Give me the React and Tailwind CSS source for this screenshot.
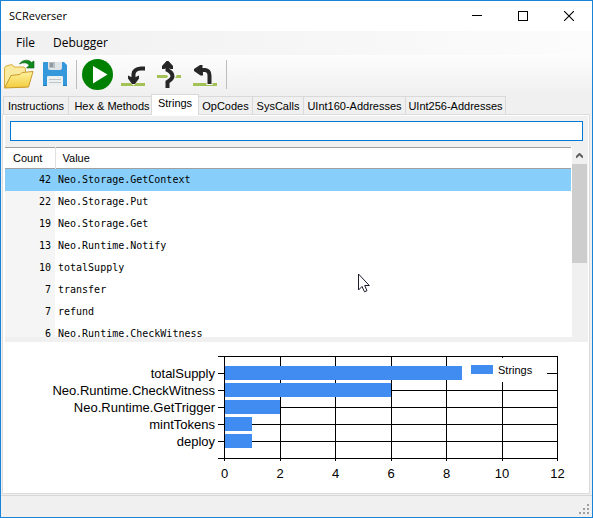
import React from "react";

const tabs = [
  { name: "Instructions", cls: "w-[66px]" },
  { name: "Hex & Methods", cls: "w-[84px] pl-1" },
  { name: "Strings", cls: "w-12" },
  { name: "OpCodes", cls: "w-[55px]" },
  { name: "SysCalls", cls: "w-[52px]" },
  { name: "UInt160-Addresses", cls: "w-[103px]" },
  { name: "UInt256-Addresses", cls: "w-[101px]" },
];

const rows = [
  [42, "Neo.Storage.GetContext"],
  [22, "Neo.Storage.Put"],
  [19, "Neo.Storage.Get"],
  [13, "Neo.Runtime.Notify"],
  [10, "totalSupply"],
  [7, "transfer"],
  [7, "refund"],
  [6, "Neo.Runtime.CheckWitness"],
];

const bars = [
  ["totalSupply", 10],
  ["Neo.Runtime.CheckWitness", 6],
  ["Neo.Runtime.GetTrigger", 2],
  ["mintTokens", 1],
  ["deploy", 1],
];

function TitleBar() {
  const btn = "flex h-full w-[46px] items-center justify-center";
  return (
    <header className="flex h-[30px] items-center bg-white">
      <h1 className="flex-1 pl-2 text-[11px] leading-4 text-black">SCReverser</h1>
      <button aria-label="Minimize" className={btn}>
        <svg width="10" height="10" shapeRendering="crispEdges"><path d="M0 4.500H10" stroke="#000" /></svg>
      </button>
      <button aria-label="Maximize" className={btn}>
        <svg width="10" height="10" shapeRendering="crispEdges"><rect x=".5" y=".5" width="9" height="9" fill="none" stroke="#000" /></svg>
      </button>
      <button aria-label="Close" className={btn}>
        <svg width="10" height="10"><path d="M0 0L10 10M10 0L0 10" stroke="#000" strokeWidth="1.1" /></svg>
      </button>
    </header>
  );
}

function OpenIcon() {
  return (
    <svg width="32" height="31" viewBox="0 0 32 31">
      <defs>
        <linearGradient id="fold" x1="0" y1="0" x2="0" y2="1">
          <stop offset="0" stopColor="#fff3a0" />
          <stop offset="1" stopColor="#f2cc3c" />
        </linearGradient>
      </defs>
      <path d="M1.500 28V9L3 7L9 5.500L11 8L21 8L22.500 10V28Z" fill="#faeaa0" stroke="#d9ae3a" />
      <path d="M1.500 29L8 16.500L17 15.500L19 13.500L30 12.500L25.500 28Z" fill="url(#fold)" stroke="#c9982a" strokeLinejoin="round" />
      <path d="M16.500 5C19 .5 26 0 28.500 3.500L31 2V9H23.500L26 6.500C24.500 3.500 21 3 16.500 5Z" fill="#118a1d" stroke="#0b5f12" strokeWidth=".6" />
    </svg>
  );
}

function SaveIcon() {
  return (
    <svg width="24" height="25" viewBox="0 0 24 25">
      <path d="M1 0H21L24 3V23Q24 24 23 24H1Q0 24 0 23V1Q0 0 1 0Z" fill="#3498db" />
      <path d="M5 0H19V6Q19 8 17 8H7Q5 8 5 6Z" fill="#dfe4e6" />
      <rect x="6" y="0" width="6" height="6" fill="#b8c0c4" />
      <rect x="7" y="1" width="3" height="4" fill="#8d999e" />
      <path d="M4 24V15Q4 14 5 14H19Q20 14 20 15V24Z" fill="#ecf0f1" />
      <path d="M6 17.500H18M6 20.500H18" stroke="#bdc3c7" />
      <path d="M0 23.500H4M20 23.500H24" stroke="#217dbb" />
    </svg>
  );
}

function PlayIcon() {
  return (
    <svg width="31" height="31" viewBox="0 0 31 31">
      <circle cx="15.500" cy="15.500" r="15.500" fill="#008000" />
      <path d="M11 7L25.500 15.500L11 24.500Z" fill="#fff" />
    </svg>
  );
}

function StepInto() {
  return (
    <svg width="24" height="29" viewBox="0 0 24 29">
      <path d="M0 23H24V26H0Z" fill="#a3c255" />
      <path d="M12.500 25.500L9.500 23H15.500Z" fill="#f8f8f8" />
      <path d="M24 8.500H20Q13 9 12.500 14V19" fill="none" stroke="#262626" strokeWidth="4" />
      <path d="M7 15.500L12.500 18L18 15.500V18.500L14 24H11L7 18.500Z" fill="#262626" />
    </svg>
  );
}

function StepOver() {
  return (
    <svg width="24" height="29" viewBox="0 0 24 29">
      <path d="M0 15H24V18H0Z" fill="#a3c255" />
      <path d="M10 11.500L15.500 16L12 20" fill="none" stroke="#f8f8f8" strokeWidth="6" />
      <path d="M10.500 5V10Q15.500 12.500 15.500 16.500Q15 19.500 10.500 22V28" fill="none" stroke="#262626" strokeWidth="4" />
      <path d="M9.500 1H11.500L16 6V9H13.500L10.500 7L7.500 9H5V6Z" fill="#262626" />
    </svg>
  );
}

function StepOut() {
  return (
    <svg width="24" height="29" viewBox="0 0 24 29">
      <path d="M0 23H24V26H0Z" fill="#a3c255" />
      <path d="M13.500 22H19.500V25H13.500Z" fill="#f8f8f8" />
      <path d="M5 10H12Q16.500 10.500 16.500 15.500V24" fill="none" stroke="#262626" strokeWidth="4" />
      <path d="M1 9L7 5H9.500V7.500L8.500 10L10 12.500V15.500H7.500L1 11Z" fill="#262626" />
    </svg>
  );
}

function Separator() {
  return <span className="h-[29px] w-px bg-[#bdbdbd]" />;
}

function Toolbar() {
  return (
    <div className="flex h-[39px] items-center bg-linear-to-b from-[#fdfdfd] to-[#f0f0f0] pl-[2px]">
      <button aria-label="Open"><OpenIcon /></button>
      <button aria-label="Save" className="ml-2 mr-[9px]"><SaveIcon /></button>
      <Separator />
      <button aria-label="Run" className="ml-[5px] mr-2"><PlayIcon /></button>
      <div className="mr-[9px] flex gap-3">
        <button aria-label="Step into"><StepInto /></button>
        <button aria-label="Step over"><StepOver /></button>
        <button aria-label="Step out"><StepOut /></button>
      </div>
      <Separator />
    </div>
  );
}

function TabStrip() {
  return (
    <div role="tablist" className="flex h-5 items-end bg-[#f0f0f0] pl-[2px]">
      {tabs.map((t) => {
        const on = t.name === "Strings";
        return (
          <button
            key={t.name}
            role="tab"
            aria-selected={on}
            className={`${t.cls} -mr-px shrink-0 whitespace-nowrap border border-b-0 border-[#d9d9d9] text-center text-[11px] leading-4 ${
              on ? "relative z-10 -mb-px h-[21px] bg-white pb-1" : "h-[18px] bg-[#f0f0f0]"
            }`}
          >
            {t.name}
          </button>
        );
      })}
    </div>
  );
}

function StringsTable() {
  return (
    <div className="flex h-[190px] overflow-hidden bg-[#f0f0f0]">
      <div className="flex-1 overflow-hidden bg-white pr-px">
        <table className="w-full table-fixed border-collapse">
          <thead>
            <tr className="h-[21px] border-y border-[#a0a0a0] text-[11px] leading-4">
              <th className="w-[50px] border-r border-r-[#e0e0e0] p-0 pl-2 text-left font-normal">Count</th>
              <th className="p-0 pl-[7px] text-left font-normal">Value</th>
            </tr>
          </thead>
          <tbody className="font-['DejaVu_Sans_Mono',monospace] text-[10px] leading-4">
            {rows.map(([n, v], i) => (
              <tr key={v} className={`h-[22px] ${i === 0 ? "bg-[#87cefa]" : ""}`}>
                <td className={`p-0 pr-1 text-right ${i === 0 ? "" : "bg-[#f5f5f5]"}`}>{n}</td>
                <td className="p-0 pl-[3px]">{v}</td>
              </tr>
            ))}
          </tbody>
        </table>
      </div>
      <div className="flex w-4 flex-col pr-px">
        <button aria-label="Scroll up" className="flex h-[17px] items-center justify-center">
          <svg width="7" height="6" viewBox="0 0 7 6"><path d="M0 4.500L3.500 1L7 4.500" fill="none" stroke="#606060" strokeWidth="2" /></svg>
        </button>
        <div className="h-[99px] bg-[#cdcdcd]" />
      </div>
    </div>
  );
}

function Chart() {
  const x0 = 219.5;
  const unit = 55.5 / 2;
  const ticks = [0, 2, 4, 6, 8, 10, 12];
  const lines = [14.5, 31.5, 48.5, 65.5, 82.5, 99.5, 116.5];
  return (
    <svg viewBox="0 0 583 151" className="block w-full" role="img" aria-label="Strings chart">
      <g stroke="#000" shapeRendering="crispEdges">
        {ticks.map((t) => (
          <path key={t} d={`M${Math.floor(x0 + t * unit) + 0.5} 14V119`} />
        ))}
        {lines.map((y) => (
          <path key={y} d={`M213 ${y}H553`} />
        ))}
      </g>
      {bars.map(([name, n], i) => (
        <g key={name}>
          <rect x="220" y={24 + i * 17} width={Math.floor(n * unit)} height="14" fill="#418cf0" shapeRendering="crispEdges" />
          <text x="210" y={36 + i * 17} textAnchor="end" className="text-[13px]">{name}</text>
        </g>
      ))}
      {ticks.map((t) => (
        <text key={t} x={x0 + t * unit} y="136" textAnchor="middle" className="text-[13px]">{t}</text>
      ))}
      <rect x="457" y="16" width="85" height="24" fill="#fff" />
      <rect x="466" y="23" width="22" height="9" fill="#418cf0" />
      <text x="493" y="32" className="text-[11px]">Strings</text>
    </svg>
  );
}

function Pointer() {
  return (
    <svg className="pointer-events-none absolute left-[356px] top-[272px]" width="13" height="20" viewBox="0 0 13 20">
      <path d="M1.500 1V17L5 13.500L7.500 18.800L10 17.700L7.700 12.500H12.300Z" fill="#fff" stroke="#1b1b2b" />
    </svg>
  );
}

export default function App() {
  return (
    <div className="relative flex min-h-screen flex-col border border-[#1883d7] bg-[#f0f0f0] font-['Liberation_Sans',Arial,sans-serif] text-black">
      <div className="font-['Open_Sans','Noto_Sans',sans-serif]">
        <TitleBar />
        <nav className="flex h-6 items-center gap-[18px] bg-linear-to-r from-[#f0f0f0] to-[#fcfcfc] pl-[15px] text-[12px] leading-4">
          <button>File</button>
          <button>Debugger</button>
        </nav>
      </div>
      <Toolbar />
      <TabStrip />
      <main className="ml-px mr-[2px] flex flex-1 flex-col border border-[#dcdcdc] bg-white pl-[2px] pr-px pt-px">
        <div className="bg-[#f0f0f0] px-[5px] pb-[6px] pt-[5px]">
          <input aria-label="Filter strings" className="block h-5 w-full border border-[#0078d7] bg-white px-1 text-[11px] outline-none" />
        </div>
        <StringsTable />
        <div className="h-[5px] bg-[#f0f0f0]" />
        <Chart />
      </main>
      <footer className="mt-px flex h-[22px] items-end justify-end border-t border-[#d7d7d7] pb-[2px] pr-[2px]">
        <svg width="11" height="11" viewBox="0 0 11 11" fill="#a0a0a0" shapeRendering="crispEdges">
          <path d="M8 0h2v2h-2zM4 4h2v2h-2zM8 4h2v2h-2zM0 8h2v2h-2zM4 8h2v2h-2zM8 8h2v2h-2z" />
        </svg>
      </footer>
      <Pointer />
    </div>
  );
}
